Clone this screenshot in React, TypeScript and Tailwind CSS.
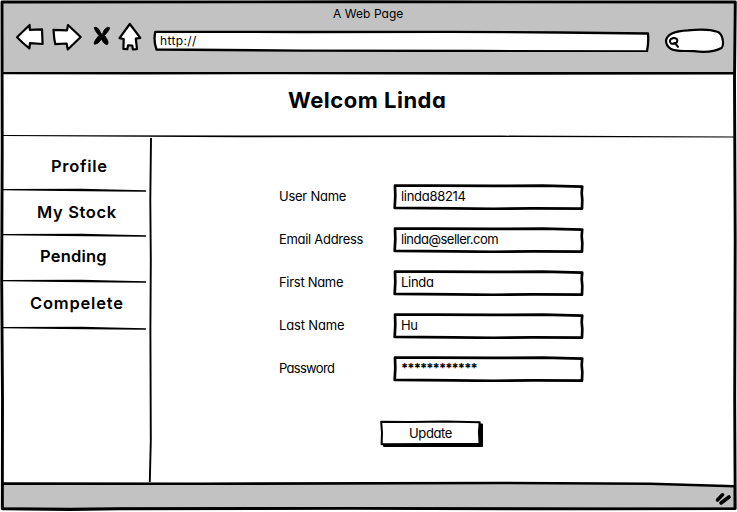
import React from "react";

const ink = { stroke: "#000", strokeLinejoin: "round", strokeLinecap: "round" } as const;

const navItems = [
  { label: "Profile", box: "h-[52px] pt-[16px]", text: "ml-[49px] tracking-[0.7px]" },
  { label: "My Stock", box: "h-[45px] pt-[10px]", text: "ml-[35px] tracking-[0.65px]" },
  { label: "Pending", box: "h-[46px] pt-[9px]", text: "ml-[38px] tracking-[0.2px]" },
  { label: "Compelete", box: "h-[47px] pt-[10px]", text: "ml-[28px] tracking-[0.8px]" },
];

const fields = [
  { label: "User Name", labelStyle: "tracking-[-0.25px]", value: "linda88214", valueStyle: "tracking-[-0.3px]" },
  { label: "Email Address", labelStyle: "tracking-[-0.3px]", value: "linda@seller.com", valueStyle: "tracking-[-0.5px]" },
  { label: "First Name", labelStyle: "tracking-[-0.3px]", value: "Linda", valueStyle: "tracking-[-0.3px]" },
  { label: "Last Name", labelStyle: "tracking-[-0.15px]", value: "Hu", valueStyle: "tracking-[-0.5px]" },
  { label: "Password", labelStyle: "tracking-[-0.7px]", value: "************", valueStyle: "font-bold tracking-[-0.95px]" },
];

function Toolbar() {
  return (
    <div className="flex items-start">
      <svg className="ml-[13px] block h-[34px] w-[130px]" viewBox="15 20 130 34" fill="#fff" strokeWidth="2.2" {...ink}>
        <path d="M17 37.3 29.6 25 29.8 29.8 42 29.3 42.6 44 30 43.2 29.4 48.3 23 43Z" />
        <path d="M53.5 29.8 67 30.3 68 25 80.7 37 67.8 49.5 66.6 43.5 55.3 44.2 54.3 39Z" />
        <path d="M129.8 24 140.3 37.8 135.8 38.6 137 49.2 132.8 49.3 132.3 45.5 128 45.4 127.3 49.2 123.4 49 123.7 39 119.5 38.2Z" />
        <path d="M94.5 27.5Q97.5 26 100.5 32.5L102 35 104.5 29.5Q108 26 109.5 27.8 110 29.5 104.5 35.5 109.5 42 107.5 44.3 104.5 45.3 101.5 39 98 44.5 94.5 44.3 92.8 42.5 99 35.5 93.8 29.5 94.5 27.5Z" fill="#000" strokeWidth=".9" />
      </svg>
      <div className="relative ml-[8px] mt-[10px] h-[22px] w-[497px]">
        <svg className="absolute inset-0 block h-[22px] w-[497px]" viewBox="153 30 497 22" fill="#fff" strokeWidth="2.3" {...ink}>
          <path d="M155.3 31.8 300 32 450 31.8 560 32.5 648 33.5Q648.8 42 647 51.3L480 51 300 50.6 156.5 49.5Q153.3 41 155.3 31.8Z" />
        </svg>
        <span className="relative ml-[7px] mt-[3px] block text-[12px] leading-[16px] tracking-[0.35px]">http://</span>
      </div>
      <svg className="ml-[14px] mt-[8px] block h-[26px] w-[61px]" viewBox="664 28 61 26" fill="#fff" strokeWidth="2.2" {...ink}>
        <path d="M666 40.5C667 34 674 31 688 30.3C702 28.8 714 30 718.5 32.3C722.8 35 724.5 45 721.5 48C716 51 705 52.5 694 51.2C684 50.4 677 52.3 670.5 48.7C667.5 46.5 666 44 666 40.5Z" />
        <path d="M675 43C671.5 44.8 669.3 42.8 670 40.3C671 37.6 675 37.6 676.6 38.8C678 40.5 677.3 43 675 43L678 46.8" strokeWidth="2.1" />
      </svg>
    </div>
  );
}

type FieldProps = { label: string; labelStyle: string; value: string; valueStyle: string };

function Field({ label, labelStyle, value, valueStyle }: FieldProps) {
  return (
    <div className="flex h-[26px] items-start">
      <span className={`mt-[4px] w-[115px] pl-px text-[13px] leading-[16px] ${labelStyle}`}>{label}</span>
      <div className="relative h-[26px] w-[191px]">
        <svg className="absolute inset-0 block h-[26px] w-[191px]" viewBox="0 0 191 26" fill="#fff" strokeWidth="2.7" {...ink}>
          <path d="M2 1.7 40 1.7 100 1.9 150 1.7 189.2 2.6 188.7 9 189.3 16 189 24.6 140 24.3 100 24.8 60 24.4 1.7 23.9 2.3 12Z" />
        </svg>
        <span className={`relative ml-[8px] mt-[4px] block text-[13px] leading-[16px] ${valueStyle}`}>{value}</span>
      </div>
    </div>
  );
}

export default function App() {
  return (
    <div className="relative flex h-[512px] w-[737px] flex-col overflow-hidden bg-white px-[2px] pt-[2px] font-['Inter','Liberation_Sans',sans-serif] text-black [font-feature-settings:'cv11','calt'_0]">
      <header className="h-[70px] bg-[#c2c2c2]">
        <h1 className="ml-[331px] pt-[4px] text-[12px] leading-[16px] tracking-[0.05px]">A Web Page</h1>
        <div className="-mt-[2px]"><Toolbar /></div>
      </header>
      <svg className="block h-[3px] w-[733px]" viewBox="0 0 733 3" stroke="#000" strokeWidth="2.6">
        <path d="M0 1 140 1.2 280 1 520 1.4 733 1.2" fill="none" />
      </svg>
      <section className="h-[59px] pt-[11px]">
        <h2 className="ml-[286px] text-[22px] font-bold leading-[28px] tracking-[0.5px]">Welcom Linda</h2>
      </section>
      <svg className="block h-[4px] w-[733px]" viewBox="0 0 733 4" fill="#000">
        <path d="M0 1 90 1.2 240 1.5 500 1.6 733 2.5V3.5L500 3 240 3.3 90 2.6 0 2Z" />
      </svg>
      <main className="flex h-[343px]">
        <nav className="w-[145px]">
          {navItems.map((item) => (
            <div key={item.label}>
              <div className={item.box}>
                <span className={`block whitespace-nowrap text-[16.5px] font-semibold leading-[24px] ${item.text}`}>{item.label}</span>
              </div>
              <svg className="-mt-px block h-px w-[144px] overflow-visible" viewBox="0 0 144 1" fill="#000">
                <path d="M0 0 80-.2 110 .5 144 1.3V2.7L110 2.4 60 2.1 0 1.2Z" />
              </svg>
            </div>
          ))}
        </nav>
        <svg className="block h-[344px] w-[6px]" viewBox="145 138 6 344" fill="none" stroke="#000">
          <path d="M149 138 148.3 200 148.8 260 148.4 330 148.8 440 147.8 482" strokeWidth="1.9" />
        </svg>
        <div className="pl-[125px] pt-[46px]">
          <form className="flex flex-col gap-[17px]">
            {fields.map((field) => (
              <Field key={field.label} {...field} />
            ))}
          </form>
          <button type="button" className="relative ml-[102px] mt-[38px] block h-[28px] w-[104px]">
            <svg className="absolute inset-0 block h-[28px] w-[104px]" viewBox="0 0 104 28" {...ink}>
              <path d="M4 4H102.5V26.5H4Z" strokeWidth="1" />
              <path d="M1.2 1.7 30 2 65 1.4 99.7 2.3 98.9 12 99.6 23.7 60 23.9 1.6 24.3 2 13Z" fill="#fff" strokeWidth="2" />
            </svg>
            <span className="relative -mt-px block w-[101px] pb-px text-center text-[13px] leading-[16px] tracking-[-0.4px]">Update</span>
          </button>
        </div>
      </main>
      <footer className="relative h-[28px]">
        <svg className="block h-[28px] w-[733px]" viewBox="2 480 733 28" stroke="#000">
          <path d="M2 482.6 200 482.8 500 482 650 482.8 735 485.3V508H2Z" fill="#c2c2c2" strokeWidth="2.6" />
          <g strokeLinecap="round" strokeWidth="3.6">
            <path d="M717.5 499 722.5 493.8M721 502 729 496" />
          </g>
        </svg>
      </footer>
      <svg className="pointer-events-none absolute inset-0 h-[512px] w-[737px]" viewBox="0 0 737 512" fill="none" strokeWidth="2.9" {...ink}>
        <path d="M2 2 370 1.8 735.3 2 734.5 80 735.2 240 734.7 400 735.2 508.6 600 508.9 350 508.4 120 508.7 70 509.5 2.3 508.8 2.5 400 1.7 280 2.2 150Z" />
      </svg>
    </div>
  );
}
